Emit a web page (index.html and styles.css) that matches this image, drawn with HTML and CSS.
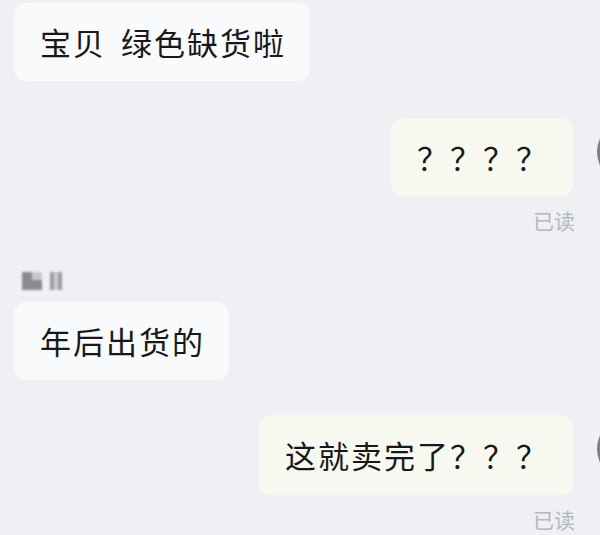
FILE: index.html
```html
<!DOCTYPE html>
<html lang="zh-CN">
<head>
<meta charset="utf-8">
<link rel="stylesheet" href="styles.css">
</head>
<body>
<div class="chat">
  <div class="row row-left first">
    <div class="bubble bubble-in">宝贝<span class="gap"> </span>绿色缺货啦</div>
  </div>

  <div class="row row-right m2">
    <div class="bubble bubble-out">？？？？</div>
    <div class="avatar"></div>
  </div>
  <div class="read">已读</div>

  <div class="name">
    <span class="blk blk-a"><span class="blk-a-hi"></span></span>
    <span class="blk blk-b"><span class="blk-b-hi"></span></span>
  </div>
  <div class="row row-left m3">
    <div class="bubble bubble-in">年后出货的</div>
  </div>

  <div class="row row-right m4">
    <div class="bubble bubble-out">这就卖完了？？？</div>
    <div class="avatar"></div>
  </div>
  <div class="read">已读</div>
</div>
</body>
</html>
```

FILE: styles.css
```css
html, body {
  margin: 0;
  padding: 0;
  background: #eff0f4;
  width: 600px;
  height: 535px;
  overflow: hidden;
}

.chat {
  display: flex;
  flex-direction: column;
  padding-top: 3px;
  font-family: "Noto Sans CJK SC", "Noto Sans", sans-serif;
  color: #18181a;
}

.row {
  display: flex;
  align-items: flex-start;
}

.row-left {
  padding-left: 14px;
}

.row-right {
  justify-content: flex-end;
  margin-right: -61px;
}

.m2 { margin-top: 37px; }
.m3 { margin-top: 12px; }
.m4 { margin-top: 35px; }

.bubble {
  flex: none;
  font-size: 31px;
  line-height: 40px;
  letter-spacing: 2px;
  padding: 19px 24px 19px 26px;
  border-radius: 12px;
  white-space: nowrap;
}

.bubble-in {
  background: #f9fafc;
}

.bubble-out {
  background: #f7f9f0;
}

.m4 .bubble {
  padding-top: 20px;
  padding-bottom: 20px;
}

.gap {
  word-spacing: 6px;
}

.avatar {
  width: 64px;
  height: 64px;
  border-radius: 50%;
  background: #7e7e82;
  margin-left: 24px;
  margin-top: 2px;
  flex: none;
}

.read {
  align-self: flex-end;
  margin-right: 25px;
  margin-top: 12px;
  font-size: 21px;
  line-height: 24px;
  color: #b6b7ba;
}

.name {
  display: flex;
  margin-top: 40px;
  padding-left: 22px;
  height: 18px;
  gap: 8px;
  filter: blur(1px);
}

.blk {
  display: block;
  height: 18px;
  position: relative;
}

.blk-a {
  width: 20px;
  background: #8b8b8e;
}

.blk-a-hi {
  position: absolute;
  right: 0;
  top: 0;
  width: 10px;
  height: 8px;
  background: #c9c9cc;
}

.blk-b {
  width: 12px;
  background: #9d9da0;
}

.blk-b-hi {
  position: absolute;
  left: 4px;
  top: 0;
  width: 4px;
  height: 18px;
  background: #d0d0d3;
}
```
